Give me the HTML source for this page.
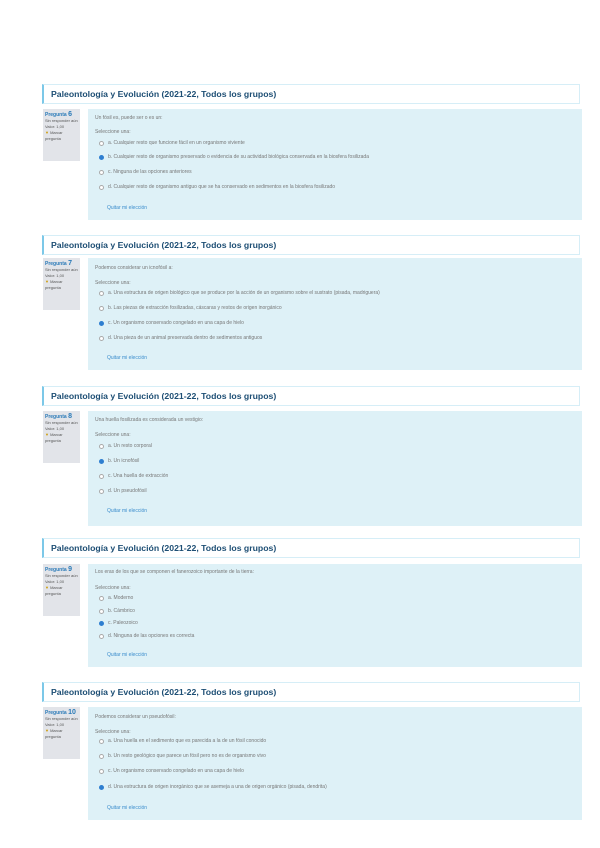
<!DOCTYPE html>
<html><head><meta charset="utf-8"><style>
body{margin:0;width:600px;height:848px;background:#fff;position:relative;overflow:hidden;font-family:"Liberation Sans",sans-serif}
.t{position:absolute;left:42px;width:538px;height:20px;border:1px solid #d6eef7;border-left:2px solid #7cc8e8;box-sizing:border-box;background:#fff}
.t span{position:absolute;left:7px;top:4px;font-size:8.7px;font-weight:bold;color:#1d4e74;white-space:nowrap}
.i{position:absolute;left:43px;width:37px;height:52px;background:#e2e4e9;font-size:4px;color:#555;line-height:6px;padding:3px 2px;box-sizing:border-box}
.i b{color:#2a7ab8;font-size:5px}
.i b em{font-style:normal;font-size:7px}
.c{position:absolute;left:88px;width:494px;background:#def1f7}
.x{position:absolute;font-size:5px;color:#777;white-space:nowrap}
.r{position:absolute;width:5px;height:5px;border:1px solid #aaa;border-radius:50%;background:#fff;box-sizing:border-box}
.r.on{background:#2f7fd0;border-color:#2f7fd0}
.l{position:absolute;font-size:5px;color:#3a8ccc;white-space:nowrap}
</style></head><body>

<div class="t" style="top:84px"><span>Paleontología y Evolución (2021-22, Todos los grupos)</span></div>
<div class="i" style="top:109px"><b>Pregunta <em>6</em></b><br>Sin responder aún<br>Valor: 1,00<br><span style="color:#c90">▼</span> Marcar pregunta</div>
<div class="c" style="top:109px;height:111px"></div>
<div class="x" style="left:95px;top:115px">Un fósil es, puede ser o es un:</div>
<div class="x" style="left:95px;top:129px">Seleccione una:</div>
<div class="r" style="left:99px;top:141px"></div><div class="x" style="left:108px;top:140px">a. Cualquier resto que funcione fácil en un organismo viviente</div>
<div class="r on" style="left:99px;top:155px"></div><div class="x" style="left:108px;top:154px">b. Cualquier resto de organismo preservado o evidencia de su actividad biológica conservada en la biosfera fosilizada</div>
<div class="r" style="left:99px;top:170px"></div><div class="x" style="left:108px;top:169px">c. Ninguna de las opciones anteriores</div>
<div class="r" style="left:99px;top:185px"></div><div class="x" style="left:108px;top:184px">d. Cualquier resto de organismo antiguo que se ha conservado en sedimentos en la biosfera fosilizado</div>
<div class="l" style="left:107px;top:205px">Quitar mi elección</div>

<div class="t" style="top:235px"><span>Paleontología y Evolución (2021-22, Todos los grupos)</span></div>
<div class="i" style="top:258px"><b>Pregunta <em>7</em></b><br>Sin responder aún<br>Valor: 1,00<br><span style="color:#c90">▼</span> Marcar pregunta</div>
<div class="c" style="top:258px;height:112px"></div>
<div class="x" style="left:95px;top:265px">Podemos considerar un icnofósil a:</div>
<div class="x" style="left:95px;top:280px">Seleccione una:</div>
<div class="r" style="left:99px;top:291px"></div><div class="x" style="left:108px;top:290px">a. Una estructura de origen biológico que se produce por la acción de un organismo sobre el sustrato (pisada, madriguera)</div>
<div class="r" style="left:99px;top:306px"></div><div class="x" style="left:108px;top:305px">b. Las piezas de extracción fosilizadas, cáscaras y restos de origen inorgánico</div>
<div class="r on" style="left:99px;top:321px"></div><div class="x" style="left:108px;top:320px">c. Un organismo conservado congelado en una capa de hielo</div>
<div class="r" style="left:99px;top:336px"></div><div class="x" style="left:108px;top:335px">d. Una pieza de un animal preservada dentro de sedimentos antiguos</div>
<div class="l" style="left:107px;top:355px">Quitar mi elección</div>

<div class="t" style="top:386px"><span>Paleontología y Evolución (2021-22, Todos los grupos)</span></div>
<div class="i" style="top:411px"><b>Pregunta <em>8</em></b><br>Sin responder aún<br>Valor: 1,00<br><span style="color:#c90">▼</span> Marcar pregunta</div>
<div class="c" style="top:411px;height:115px"></div>
<div class="x" style="left:95px;top:417px">Una huella fosilizada es considerada un vestigio:</div>
<div class="x" style="left:95px;top:432px">Seleccione una:</div>
<div class="r" style="left:99px;top:444px"></div><div class="x" style="left:108px;top:443px">a. Un resto corporal</div>
<div class="r on" style="left:99px;top:459px"></div><div class="x" style="left:108px;top:458px">b. Un icnofósil</div>
<div class="r" style="left:99px;top:474px"></div><div class="x" style="left:108px;top:473px">c. Una huella de extracción</div>
<div class="r" style="left:99px;top:489px"></div><div class="x" style="left:108px;top:488px">d. Un pseudofósil</div>
<div class="l" style="left:107px;top:508px">Quitar mi elección</div>

<div class="t" style="top:538px"><span>Paleontología y Evolución (2021-22, Todos los grupos)</span></div>
<div class="i" style="top:564px"><b>Pregunta <em>9</em></b><br>Sin responder aún<br>Valor: 1,00<br><span style="color:#c90">▼</span> Marcar pregunta</div>
<div class="c" style="top:564px;height:103px"></div>
<div class="x" style="left:95px;top:569px">Los eras de los que se componen el fanerozoico importante de la tierra:</div>
<div class="x" style="left:95px;top:585px">Seleccione una:</div>
<div class="r" style="left:99px;top:596px"></div><div class="x" style="left:108px;top:595px">a. Moderno</div>
<div class="r" style="left:99px;top:609px"></div><div class="x" style="left:108px;top:608px">b. Cámbrico</div>
<div class="r on" style="left:99px;top:621px"></div><div class="x" style="left:108px;top:620px">c. Paleozoico</div>
<div class="r" style="left:99px;top:634px"></div><div class="x" style="left:108px;top:633px">d. Ninguna de las opciones es correcta</div>
<div class="l" style="left:107px;top:652px">Quitar mi elección</div>

<div class="t" style="top:682px"><span>Paleontología y Evolución (2021-22, Todos los grupos)</span></div>
<div class="i" style="top:707px"><b>Pregunta <em>10</em></b><br>Sin responder aún<br>Valor: 1,00<br><span style="color:#c90">▼</span> Marcar pregunta</div>
<div class="c" style="top:707px;height:113px"></div>
<div class="x" style="left:95px;top:714px">Podemos considerar un pseudofósil:</div>
<div class="x" style="left:95px;top:729px">Seleccione una:</div>
<div class="r" style="left:99px;top:739px"></div><div class="x" style="left:108px;top:738px">a. Una huella en el sedimento que es parecida a la de un fósil conocido</div>
<div class="r" style="left:99px;top:754px"></div><div class="x" style="left:108px;top:753px">b. Un resto geológico que parece un fósil pero no es de organismo vivo</div>
<div class="r" style="left:99px;top:769px"></div><div class="x" style="left:108px;top:768px">c. Un organismo conservado congelado en una capa de hielo</div>
<div class="r on" style="left:99px;top:785px"></div><div class="x" style="left:108px;top:784px">d. Una estructura de origen inorgánico que se asemeja a una de origen orgánico (pisada, dendrita)</div>
<div class="l" style="left:107px;top:805px">Quitar mi elección</div>

</body></html>
